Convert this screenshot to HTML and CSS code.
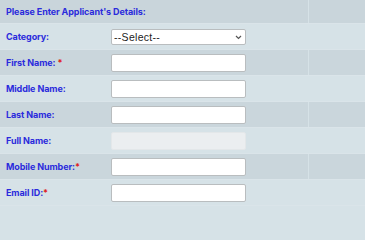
FILE: index.html
```html
<!DOCTYPE html>
<html>
<head>
<meta charset="utf-8">
<link rel="stylesheet" href="styles.css">
</head>
<body>
<table class="form">
  <tr class="head">
    <td colspan="2" class="title">Please Enter Applicant's Details:</td>
    <td class="extra"></td>
  </tr>
  <tr class="light">
    <td class="label">Category:</td>
    <td class="field">
      <span class="selwrap">
        <select class="sel"><option>--Select--</option></select>
        <svg class="chev" width="7" height="5" viewBox="0 0 7 5"><path d="M1 1 L3.5 3.5 L6 1" fill="none" stroke="#555" stroke-width="1.2"/></svg>
      </span>
    </td>
    <td class="extra"></td>
  </tr>
  <tr class="dark">
    <td class="label">First Name: <span class="req">*</span></td>
    <td class="field"><input class="inp" type="text"></td>
    <td class="extra"></td>
  </tr>
  <tr class="light">
    <td class="label">Middle Name:</td>
    <td class="field"><input class="inp" type="text"></td>
    <td class="extra"></td>
  </tr>
  <tr class="dark">
    <td class="label">Last Name:</td>
    <td class="field"><input class="inp" type="text"></td>
    <td class="extra"></td>
  </tr>
  <tr class="light">
    <td class="label">Full Name:</td>
    <td class="field"><input class="inp dis" type="text" disabled></td>
    <td class="extra"></td>
  </tr>
  <tr class="dark">
    <td class="label">Mobile Number:<span class="req">*</span></td>
    <td class="field"><input class="inp" type="text"></td>
    <td class="extra"></td>
  </tr>
  <tr class="light">
    <td class="label">Email ID:<span class="req">*</span></td>
    <td class="field"><input class="inp" type="text"></td>
    <td class="extra"></td>
  </tr>
</table>
</body>
</html>
```

FILE: styles.css
```css
html, body {
  margin: 0;
  padding: 0;
  background: #d6e2e7;
}
.form {
  width: 100%;
  border-collapse: collapse;
  font-family: Inter, "Open Sans", sans-serif;
  font-weight: 700;
  font-size: 9px;
  letter-spacing: -0.1px;
  color: #2b2bdc;
}
.form td {
  padding: 0 0 0 6px;
  height: 25px;
  vertical-align: middle;
  border-bottom: 1px solid #dae4e9;
  box-sizing: content-box;
}
.head td {
  background: #c9d5db;
  height: 23px;
}
.head .title {
  border-right: 1px solid #d6e2e7;
}
.light td {
  background: #d6e2e7;
}
.dark td {
  background: #cad6dc;
}
.label {
  width: 99px;
}
.field {
  width: 197px;
  border-right: 1px solid #d6e2e7;
}
.extra {
  padding: 0;
}
.req {
  color: #e02020;
}
.inp {
  box-sizing: border-box;
  width: 135px;
  height: 18px;
  margin: 0;
  border: 1px solid #b9bdbf;
  border-radius: 2px;
  background: #ffffff;
  display: block;
}
.selwrap {
  position: relative;
  display: block;
  width: 135px;
}
.sel {
  box-sizing: border-box;
  display: block;
  width: 135px;
  height: 16px;
  margin: 0;
  border: 1px solid #b9bdbf;
  border-radius: 2px;
  background: #ffffff;
  -webkit-appearance: none;
  appearance: none;
  font-family: "Liberation Sans", Arial, sans-serif;
  font-size: 10.5px;
  font-weight: 400;
  letter-spacing: 0.3px;
  color: #222;
  padding: 0 2px;
}
.chev {
  position: absolute;
  right: 4px;
  top: 6px;
}
.dis {
  background: #ebeef0;
  border-color: #e3e7e9;
}
```
